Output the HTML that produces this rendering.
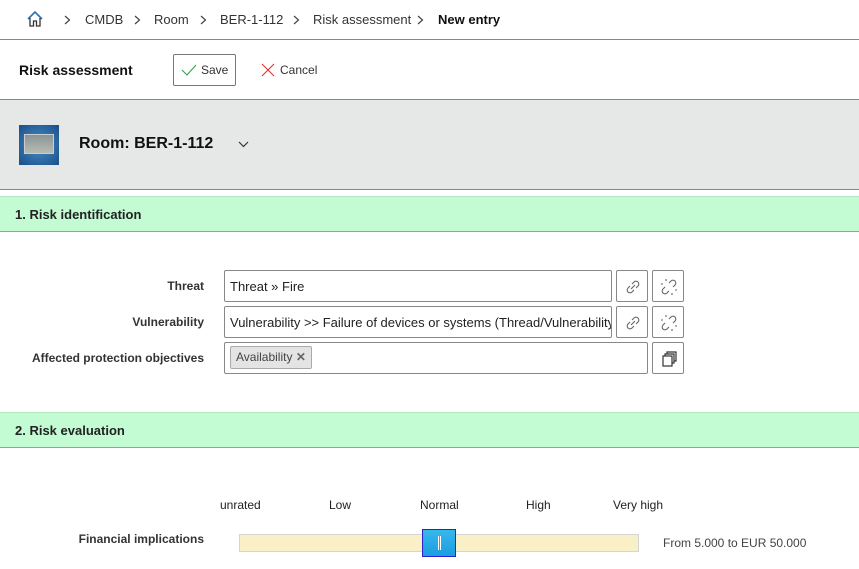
<!DOCTYPE html>
<html><head><style>
*{box-sizing:border-box;margin:0;padding:0}
body{width:859px;height:569px;overflow:hidden;background:#fff;font-family:"Liberation Sans",sans-serif;color:#222;position:relative}
.a{position:absolute}
.bc{font-size:13px;color:#333}
.chev{position:absolute;top:15px}
.lbl{font-size:12px;font-weight:bold;color:#333;text-align:right;width:200px;left:4px}
.inp{border:1px solid #888;border-radius:2px;height:32px;font-size:13px;padding:0 5px;line-height:31px;white-space:nowrap;overflow:hidden;background:#fff}
.btn{border:1px solid #888;border-radius:2px;width:32px;height:32px;background:#fff}
.btn svg{position:absolute;left:7px;top:7px}
.sec{left:0;width:859px;height:36px;background:#c3fbd3;border-top:1px solid #b0e8c0;border-bottom:1px solid #5cc77c;font-size:13px;font-weight:bold;padding-left:15px;line-height:35px}
.sc{font-size:12px;color:#222}
</style></head><body>
<svg class="a" style="left:26px;top:10px" width="18" height="18" viewBox="0 0 18 18"><path d="M2 9 L9 2 L16 9" fill="none" stroke="#2a6fb8" stroke-width="1.6"/><path d="M4 8 V16 H7.5 V11 H10.5 V16 H14 V8" fill="none" stroke="#333" stroke-width="1.3"/></svg>
<svg class="chev" style="left:64px" width="7" height="10"><path d="M1 1 L5.5 5 L1 9" fill="none" stroke="#444" stroke-width="1.2"/></svg>
<div class="a bc" style="left:85px;top:12px">CMDB</div>
<svg class="chev" style="left:134px" width="7" height="10"><path d="M1 1 L5.5 5 L1 9" fill="none" stroke="#444" stroke-width="1.2"/></svg>
<div class="a bc" style="left:154px;top:12px">Room</div>
<svg class="chev" style="left:200px" width="7" height="10"><path d="M1 1 L5.5 5 L1 9" fill="none" stroke="#444" stroke-width="1.2"/></svg>
<div class="a bc" style="left:220px;top:12px">BER-1-112</div>
<svg class="chev" style="left:293px" width="7" height="10"><path d="M1 1 L5.5 5 L1 9" fill="none" stroke="#444" stroke-width="1.2"/></svg>
<div class="a bc" style="left:313px;top:12px">Risk assessment</div>
<svg class="chev" style="left:417px" width="7" height="10"><path d="M1 1 L5.5 5 L1 9" fill="none" stroke="#444" stroke-width="1.2"/></svg>
<div class="a bc" style="left:438px;top:12px;font-weight:bold;color:#111">New entry</div>
<div class="a" style="left:0;top:39px;width:859px;height:1px;background:#888"></div>
<div class="a" style="left:19px;top:62px;font-size:14px;font-weight:bold;color:#111">Risk assessment</div>
<div class="a" style="left:173px;top:54px;width:63px;height:32px;border:1px solid #777;border-radius:2px"></div>
<svg class="a" style="left:181px;top:63px" width="16" height="14"><path d="M1 7 L6 12 L15 2" fill="none" stroke="#2a9d4a" stroke-width="1"/></svg>
<div class="a" style="left:201px;top:63px;font-size:12px;color:#333">Save</div>
<svg class="a" style="left:261px;top:63px" width="14" height="14"><path d="M1 1 L13 13 M13 1 L1 13" stroke="#e23030" stroke-width="1.1"/></svg>
<div class="a" style="left:280px;top:63px;font-size:12px;color:#333">Cancel</div>
<div class="a" style="left:0;top:99px;width:859px;height:91px;background:#e6e7e7;border-top:1px solid #888;border-bottom:1px solid #888"></div>
<div class="a" style="left:19px;top:125px;width:40px;height:40px;background:radial-gradient(circle,#4a90c8,#1a4e88)"><div style="position:absolute;left:5px;top:9px;width:30px;height:20px;background:linear-gradient(#8a9498,#b8bcb0);border:1px solid #ccc"></div></div>
<div class="a" style="left:79px;top:135px;font-size:16px;font-weight:bold;color:#111">Room: BER-1-112</div>
<svg class="a" style="left:238px;top:141px" width="11" height="7"><path d="M1 1 L5.5 5.5 L10 1" fill="none" stroke="#333" stroke-width="1.2"/></svg>
<div class="a sec" style="top:196px">1. Risk identification</div>
<div class="a lbl" style="top:279px">Threat</div>
<div class="a lbl" style="top:315px">Vulnerability</div>
<div class="a lbl" style="top:351px">Affected protection objectives</div>
<div class="a inp" style="left:224px;top:270px;width:388px">Threat » Fire</div>
<div class="a inp" style="left:224px;top:306px;width:388px">Vulnerability &gt;&gt; Failure of devices or systems (Thread/Vulnerability)</div>
<div class="a inp" style="left:224px;top:342px;width:424px;height:32px"><span style="display:inline-block;border:1px solid #aaa;background:#e4e4e4;border-radius:2px;height:23px;line-height:21px;padding:0 5px;font-size:12px;color:#444;margin-top:3px;vertical-align:top">Availability <b style="color:#666">✕</b></span></div>
<div class="a btn" style="left:616px;top:270px"><svg width="18" height="18"><path d="M7 11 L11 7 M8 6 L10 4 A2.5 2.5 0 0 1 14 8 L12 10 M6 8 L4 10 A2.5 2.5 0 0 0 8 14 L10 12" fill="none" stroke="#666" stroke-width="1.1"/></svg></div>
<div class="a btn" style="left:652px;top:270px"><svg width="18" height="18"><path d="M9 5 L11 3 A2.5 2.5 0 0 1 15 7 L13 9 M5 9 L3 11 A2.5 2.5 0 0 0 7 15 L9 13 M6 1 V3 M1 6 H3 M12 15 V17 M15 12 H17" fill="none" stroke="#666" stroke-width="1.1"/></svg></div>
<div class="a btn" style="left:616px;top:306px"><svg width="18" height="18"><path d="M7 11 L11 7 M8 6 L10 4 A2.5 2.5 0 0 1 14 8 L12 10 M6 8 L4 10 A2.5 2.5 0 0 0 8 14 L10 12" fill="none" stroke="#666" stroke-width="1.1"/></svg></div>
<div class="a btn" style="left:652px;top:306px"><svg width="18" height="18"><path d="M9 5 L11 3 A2.5 2.5 0 0 1 15 7 L13 9 M5 9 L3 11 A2.5 2.5 0 0 0 7 15 L9 13 M6 1 V3 M1 6 H3 M12 15 V17 M15 12 H17" fill="none" stroke="#666" stroke-width="1.1"/></svg></div>
<div class="a btn" style="left:652px;top:342px"><svg width="18" height="18"><rect x="3" y="6" width="9" height="10" fill="#fff" stroke="#333" stroke-width="1.2"/><path d="M5 6 V4 H14 V13 H12 M7 4 V2 H16 V11 H14" fill="none" stroke="#333" stroke-width="1.2"/></svg></div>
<div class="a sec" style="top:412px">2. Risk evaluation</div>
<div class="a sc" style="left:220px;top:498px">unrated</div>
<div class="a sc" style="left:329px;top:498px">Low</div>
<div class="a sc" style="left:420px;top:498px">Normal</div>
<div class="a sc" style="left:526px;top:498px">High</div>
<div class="a sc" style="left:613px;top:498px">Very high</div>
<div class="a lbl" style="top:532px">Financial implications</div>
<div class="a" style="left:239px;top:534px;width:400px;height:18px;background:#faf0c8;border:1px solid #d4d4d4"></div>
<div class="a" style="left:422px;top:529px;width:34px;height:28px;background:linear-gradient(#38b6ee,#1a9ee0);border:1px solid #2a20d0"><div style="position:absolute;left:15px;top:6px;width:3px;height:14px;border-left:1px solid #fff;border-right:1px solid #fff"></div></div>
<div class="a" style="left:663px;top:536px;font-size:12px;color:#444">From 5.000 to EUR 50.000</div>
</body></html>
